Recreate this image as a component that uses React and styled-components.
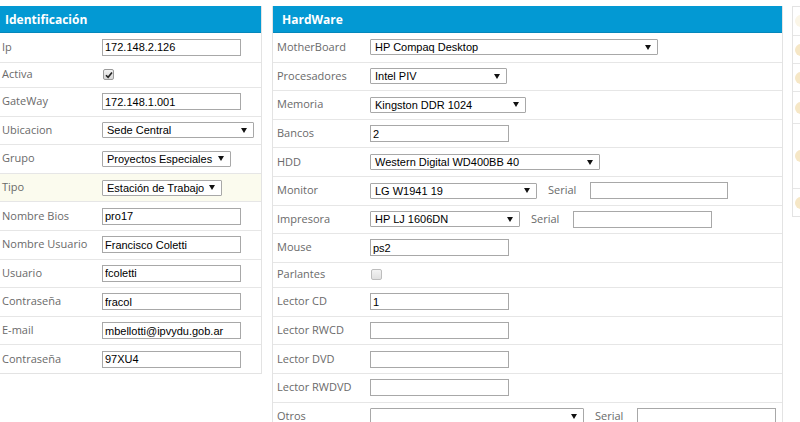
import React from "react";
import styled, { createGlobalStyle } from "styled-components";

const Global = createGlobalStyle`
  html, body { margin: 0; padding: 0; overflow: hidden; background: #fff; }
  body { font-family: "Open Sans", "Liberation Sans", sans-serif; }
`;

const Page = styled.div`
  display: flex;
  align-items: flex-start;
  gap: 10px;
  padding-top: 6px;
  margin-left: -5px;
  width: 820px;
`;

const Panel = styled.section`
  flex: none;
  box-sizing: border-box;
  width: ${(p) => p.$w}px;
  border: 1px solid #e3e3e3;
  border-top: none;
  background: #fff;
`;

const Header = styled.div`
  height: 26px;
  background: #0399d3;
  border-bottom: 1px solid #0587bb;
  color: #fff;
  font-weight: 700;
  font-size: 12px;
  display: flex;
  align-items: center;
  padding-left: 9px;
`;

const Row = styled.div`
  display: grid;
  grid-template-columns: ${(p) => p.$labelW}px 1fr;
  align-items: center;
  height: ${(p) => (p.$short ? 25.4 : 28.6)}px;
  box-sizing: border-box;
  padding-left: ${(p) => p.$pad}px;
  border-top: ${(p) => (p.$first ? "none" : "1px solid #e6e6e6")};
  background: ${(p) => (p.$hl ? "#fbfbee" : "transparent")};
`;

const Label = styled.span`
  font-size: 11px;
  color: #6a6a6a;
  white-space: nowrap;
  position: relative;
  top: -1px;
`;

const Controls = styled.div`
  display: flex;
  align-items: center;
`;

const TextInput = styled.input`
  box-sizing: border-box;
  width: ${(p) => p.$w || 139}px;
  height: 17px;
  border: 1px solid #a8a8a8;
  padding: 0 2px;
  margin: 0;
  font-family: "Liberation Sans", Arial, sans-serif;
  font-size: 11px;
  color: #000;
  background: #fff;
  outline: none;
`;

const SelectBox = styled.div`
  box-sizing: border-box;
  width: ${(p) => p.$w}px;
  height: 16px;
  border: 1px solid #a8a8a8;
  border-radius: 1px;
  background: #fff;
  display: flex;
  align-items: center;
  justify-content: space-between;
  padding: 0 6px 0 4px;
  font-family: "Liberation Sans", Arial, sans-serif;
  font-size: 11px;
  color: #000;
  white-space: nowrap;
`;

const Arrow = styled.span`
  width: 0;
  height: 0;
  border-left: 3px solid transparent;
  border-right: 3px solid transparent;
  border-top: 5px solid #111;
`;

const SerialLabel = styled.span`
  font-size: 11px;
  color: #6a6a6a;
  margin: 0 14px 0 11px;
  position: relative;
  top: -1px;
`;

const Check = styled.span`
  box-sizing: border-box;
  width: 11px;
  height: 11px;
  border: 1px solid ${(p) => (p.$on ? "#9a9a9a" : "#bdbdbd")};
  border-radius: 2px;
  background: ${(p) =>
    p.$on ? "linear-gradient(#f2f2f2, #d6d6d6)" : "linear-gradient(#f3f3f3, #e0e0e0)"};
  display: flex;
  align-items: center;
  justify-content: center;
  margin-left: 1px;
`;

const Side = styled.div`
  flex: none;
  width: 40px;
  margin-left: -1px;
  border: 1px solid #e3e3e3;
  background: #fff;
`;

const SideRow = styled.div`
  height: ${(p) => p.$h}px;
  box-sizing: border-box;
  border-top: ${(p) => (p.$first ? "none" : "1px solid #e6e6e6")};
  display: flex;
  align-items: center;
  padding-left: 2px;
`;

const Dot = styled.span`
  width: 12px;
  height: 12px;
  border-radius: 50%;
  background: ${(p) => (p.$faint ? "#fbf6e8" : "#f6e7c6")};
`;

const Select = ({ w, value }) => (
  <SelectBox $w={w}>
    <span>{value}</span>
    <Arrow />
  </SelectBox>
);

const CheckBox = ({ on }) => (
  <Check $on={on}>
    {on && (
      <svg width="8" height="8" viewBox="0 0 8 8">
        <path d="M1 4.2 L3.1 6.3 L7 1.5" fill="none" stroke="#222" strokeWidth="1.6" />
      </svg>
    )}
  </Check>
);

const left = [
  { l: "Ip", t: "input", v: "172.148.2.126" },
  { l: "Activa", t: "check", on: true },
  { l: "GateWay", t: "input", v: "172.148.1.001" },
  { l: "Ubicacion", t: "select", v: "Sede Central", w: 152 },
  { l: "Grupo", t: "select", v: "Proyectos Especiales", w: 129 },
  { l: "Tipo", t: "select", v: "Estación de Trabajo", w: 120, hl: true },
  { l: "Nombre Bios", t: "input", v: "pro17" },
  { l: "Nombre Usuario", t: "input", v: "Francisco Coletti" },
  { l: "Usuario", t: "input", v: "fcoletti" },
  { l: "Contraseña", t: "input", v: "fracol" },
  { l: "E-mail", t: "input", v: "mbellotti@ipvydu.gob.ar" },
  { l: "Contraseña", t: "input", v: "97XU4" },
];

const right = [
  { l: "MotherBoard", t: "select", v: "HP Compaq Desktop", w: 288 },
  { l: "Procesadores", t: "select", v: "Intel PIV", w: 137 },
  { l: "Memoria", t: "select", v: "Kingston DDR 1024", w: 156 },
  { l: "Bancos", t: "input", v: "2" },
  { l: "HDD", t: "select", v: "Western Digital WD400BB 40", w: 230 },
  { l: "Monitor", t: "select", v: "LG W1941 19", w: 167, serial: 138 },
  { l: "Impresora", t: "select", v: "HP LJ 1606DN", w: 150, serial: 139 },
  { l: "Mouse", t: "input", v: "ps2" },
  { l: "Parlantes", t: "check", on: false },
  { l: "Lector CD", t: "input", v: "1" },
  { l: "Lector RWCD", t: "input", v: "" },
  { l: "Lector DVD", t: "input", v: "" },
  { l: "Lector RWDVD", t: "input", v: "" },
  { l: "Otros", t: "select", v: "", w: 214, serial: 139 },
];

const FieldRow = ({ f, first, labelW, pad }) => (
  <Row $first={first} $labelW={labelW} $pad={pad} $short={f.t === "check"} $hl={f.hl}>
    <Label>{f.l}</Label>
    <Controls>
      {f.t === "input" && <TextInput readOnly value={f.v} />}
      {f.t === "select" && <Select w={f.w} value={f.v} />}
      {f.t === "check" && <CheckBox on={f.on} />}
      {f.serial && (
        <>
          <SerialLabel>Serial</SerialLabel>
          <TextInput readOnly value="" $w={f.serial} />
        </>
      )}
    </Controls>
  </Row>
);

export default function App() {
  return (
    <>
      <Global />
      <Page>
        <Panel $w={267}>
          <Header>Identificación</Header>
          {left.map((f, i) => (
            <FieldRow key={i} f={f} first={i === 0} labelW={100} pad={6} />
          ))}
        </Panel>
        <Panel $w={511}>
          <Header>HardWare</Header>
          {right.map((f, i) => (
            <FieldRow key={i} f={f} first={i === 0} labelW={93} pad={4} />
          ))}
        </Panel>
        <Side>
          <SideRow $first $h={28}><Dot $faint /></SideRow>
          <SideRow $h={28}><Dot /></SideRow>
          <SideRow $h={28}><Dot /></SideRow>
          <SideRow $h={32}><Dot /></SideRow>
          <SideRow $h={65}><Dot /></SideRow>
          <SideRow $h={28}><Dot /></SideRow>
        </Side>
      </Page>
    </>
  );
}
